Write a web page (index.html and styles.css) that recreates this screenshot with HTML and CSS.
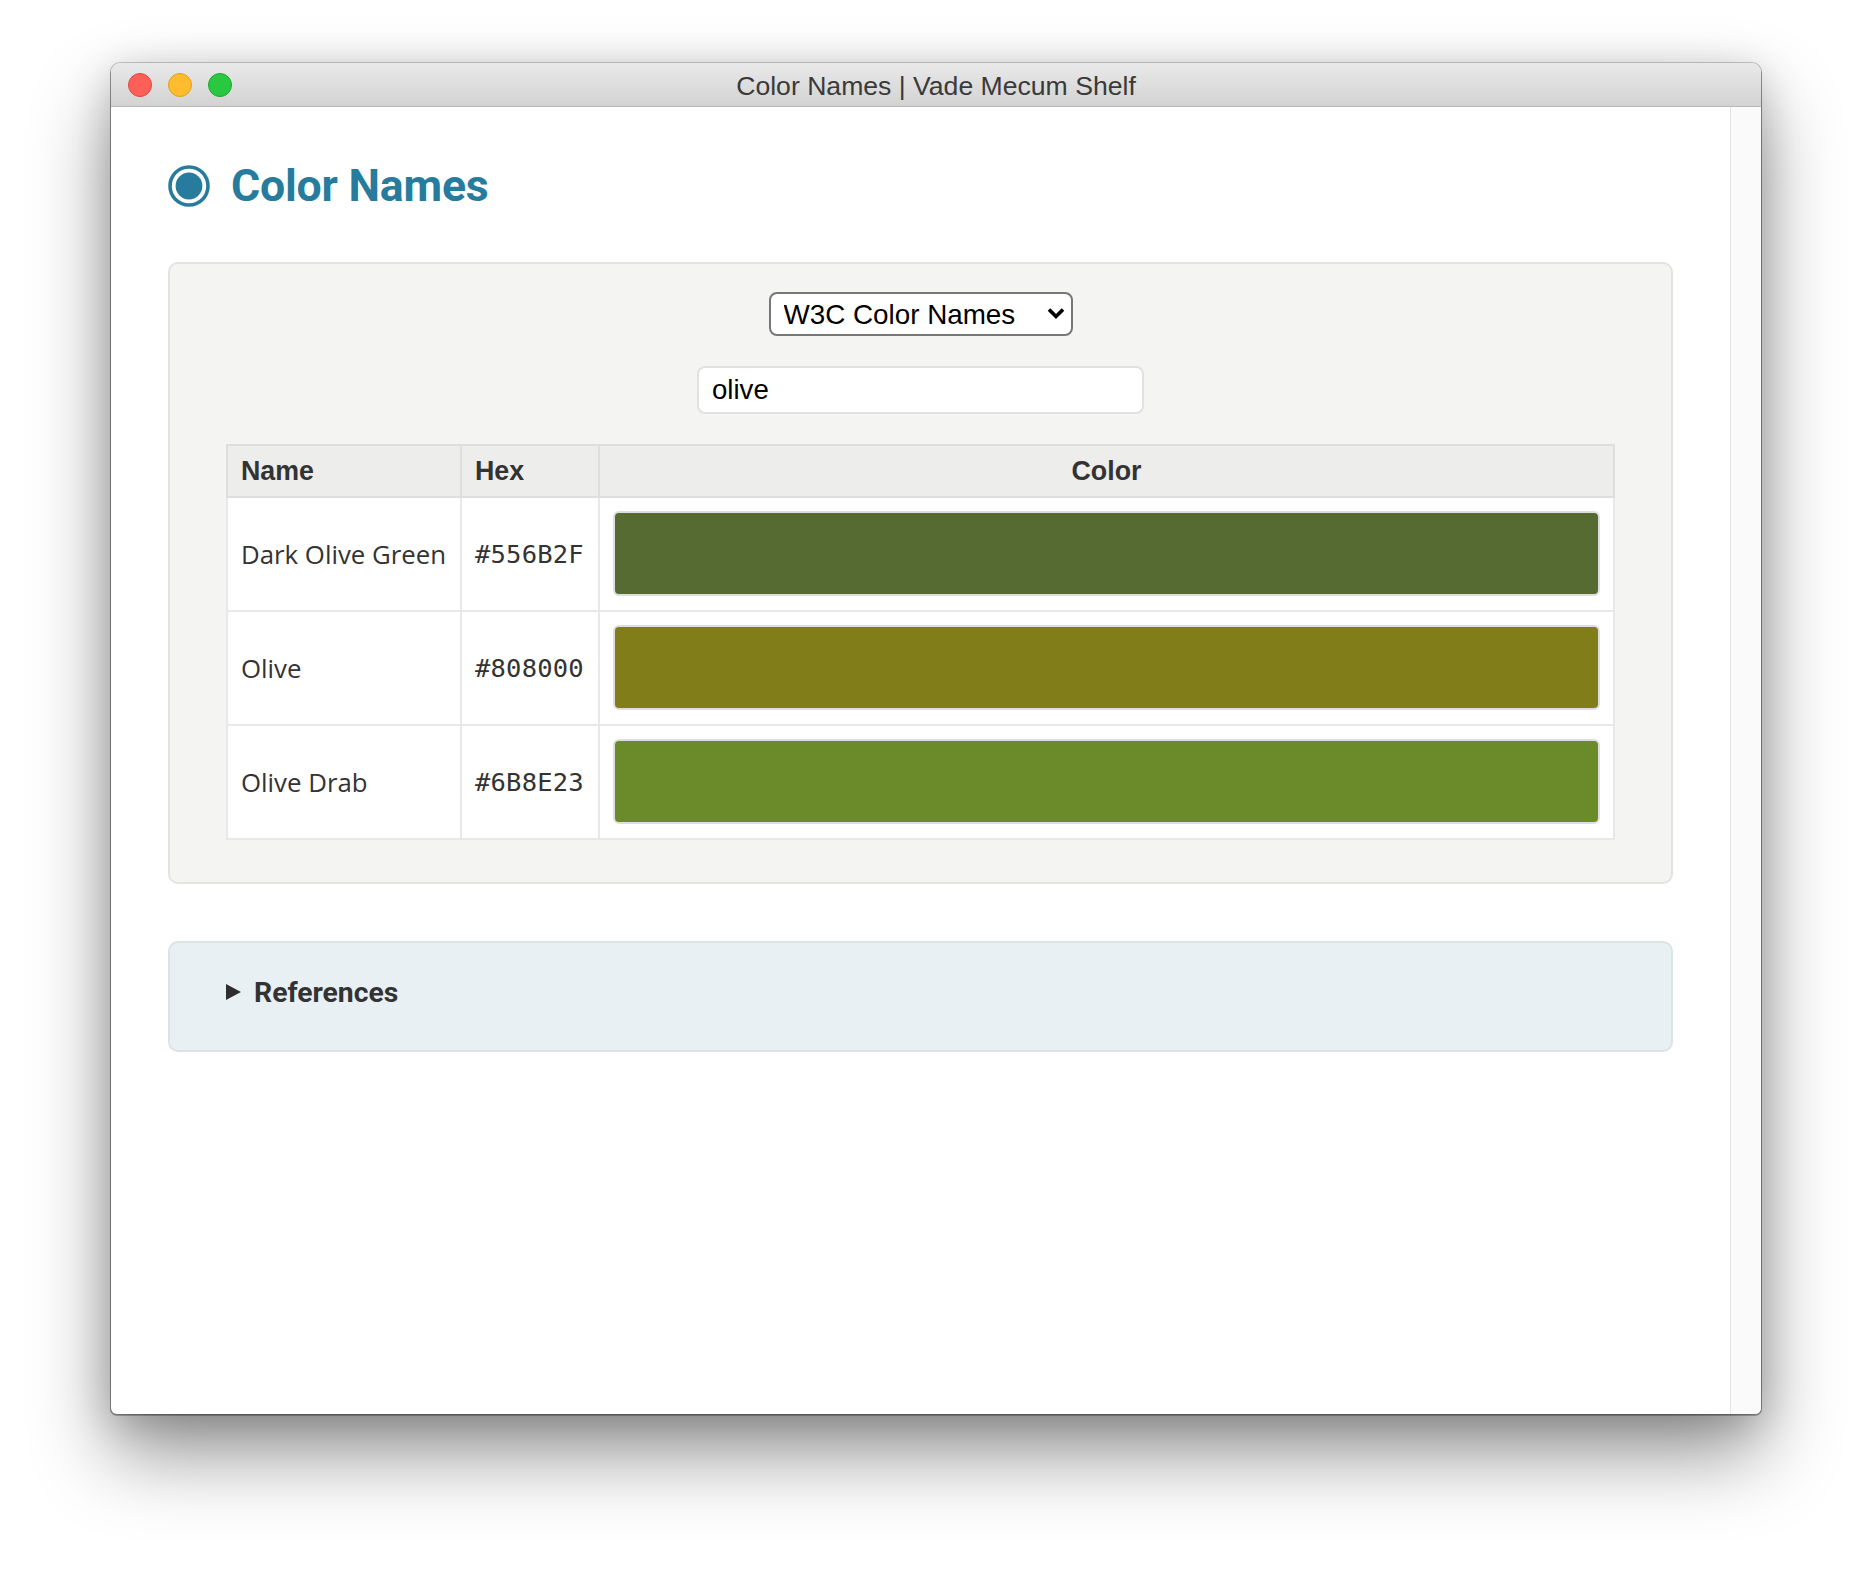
FILE: index.html
```html
<!DOCTYPE html>
<html lang="en">
<head>
<meta charset="utf-8">
<title>Color Names | Vade Mecum Shelf</title>
<link rel="stylesheet" href="styles.css">
</head>
<body>
<div class="window">
  <div class="titlebar">
    <div class="lights">
      <span class="light red"></span>
      <span class="light yellow"></span>
      <span class="light green"></span>
    </div>
    <div class="title">Color Names | Vade Mecum Shelf</div>
    <div></div>
  </div>
  <div class="viewport">
    <main class="content">
      <h1 class="heading">
        <svg class="logo" width="42" height="42" viewBox="0 0 42 42">
          <circle cx="21" cy="21" r="19" fill="none" stroke="#277c9d" stroke-width="3.6"/>
          <circle cx="21" cy="21" r="13.4" fill="#277c9d"/>
        </svg>
        <span>Color Names</span>
      </h1>
      <section class="panel">
        <div class="select-wrap">
          <select class="select"><option>W3C Color Names</option></select>
          <svg class="chev" width="18" height="13" viewBox="0 0 18 13"><polyline points="2,2.5 9,9.5 16,2.5" fill="none" stroke="#000" stroke-width="3.6" stroke-linecap="butt"/></svg>
        </div>
        <input class="search" type="text" value="olive">
        <table class="table">
          <colgroup><col class="c-name"><col class="c-hex"><col></colgroup>
          <thead>
            <tr><th>Name</th><th>Hex</th><th class="th-color">Color</th></tr>
          </thead>
          <tbody>
            <tr><td>Dark Olive Green</td><td class="hex">#556B2F</td><td class="cell-swatch"><div class="swatch" style="background:#566b31"></div></td></tr>
            <tr><td>Olive</td><td class="hex">#808000</td><td class="cell-swatch"><div class="swatch" style="background:#817d19"></div></td></tr>
            <tr><td>Olive Drab</td><td class="hex">#6B8E23</td><td class="cell-swatch"><div class="swatch" style="background:#6b8b2b"></div></td></tr>
          </tbody>
        </table>
      </section>
      <details class="refs">
        <summary class="refs-summary"><span class="tri"></span><span>References</span></summary>
      </details>
    </main>
    <div class="scrollbar"></div>
  </div>
</div>
</body>
</html>
```
FILE: styles.css
```css
html, body {
  margin: 0;
  background: #ffffff;
}

body {
  font-family: "Open Sans", "Liberation Sans", sans-serif;
  padding: 63px 0 160px 111px;
  min-height: 1574px;
  box-sizing: border-box;
}

.window {
  width: 1650px;
  height: 1351px;
  border-radius: 9px 9px 6px 6px;
  overflow: hidden;
  background: #ffffff;
  display: flex;
  flex-direction: column;
  box-shadow:
    0 0 0 1px rgba(0, 0, 0, 0.2),
    0 1px 0 1px rgba(0, 0, 0, 0.25),
    0 40px 80px rgba(0, 0, 0, 0.42),
    0 8px 40px rgba(0, 0, 0, 0.18);
}

.titlebar {
  flex: none;
  height: 44px;
  box-sizing: border-box;
  display: grid;
  grid-template-columns: 1fr auto 1fr;
  align-items: center;
  background: linear-gradient(#e9e9e9, #d3d3d3);
  border-bottom: 1px solid #b8b8b8;
}

.lights {
  display: flex;
  gap: 16px;
  padding-left: 17px;
}

.light {
  width: 24px;
  height: 24px;
  border-radius: 50%;
  box-sizing: border-box;
}

.red { background: #fe5f57; border: 1px solid #e2463f; }
.yellow { background: #febc2e; border: 1px solid #e1a116; }
.green { background: #2ac840; border: 1px solid #17a92b; }

.title {
  font-family: "Liberation Sans", Arial, sans-serif;
  font-size: 26.6px;
  color: #3a3a3a;
  white-space: nowrap;
  padding-top: 3px;
}

.viewport {
  flex: 1;
  display: flex;
  min-height: 0;
}

.content {
  flex: 1;
  padding: 0 57px;
}

.scrollbar {
  flex: none;
  width: 30px;
  background: #fafafa;
  border-left: 1px solid #e5e5e5;
}

.heading {
  margin: 58px 0 0;
  height: 42px;
  display: flex;
  align-items: center;
  gap: 21px;
  font-family: Roboto, "Liberation Sans", sans-serif;
  font-weight: 700;
  font-size: 44.6px;
  color: #277c9d;
  letter-spacing: -0.2px;
}

.logo {
  flex: none;
  display: block;
}

.panel {
  margin-top: 55px;
  background: #f4f4f3;
  border: 2px solid #e3e3e2;
  border-radius: 10px;
  padding: 28px 56px 42px;
  display: flex;
  flex-direction: column;
  align-items: center;
}

.select-wrap {
  position: relative;
  width: 304px;
  height: 44px;
}

.select {
  -webkit-appearance: none;
  appearance: none;
  width: 100%;
  height: 100%;
  box-sizing: border-box;
  border: 2px solid #777777;
  border-radius: 8px;
  background: #ffffff;
  padding: 0 0 0 13px;
  font-family: "Liberation Sans", Arial, sans-serif;
  font-size: 27.8px;
  color: #000000;
  margin: 0;
}

.chev {
  position: absolute;
  right: 8px;
  top: 15px;
  pointer-events: none;
}

.search {
  margin-top: 30px;
  width: 447px;
  height: 48px;
  box-sizing: border-box;
  border: 2px solid #e1e1e1;
  border-radius: 8px;
  padding: 0 13px;
  background: #ffffff;
  font-family: "Liberation Sans", Arial, sans-serif;
  font-size: 27.6px;
  color: #000000;
  outline: none;
}

.table {
  margin-top: 30px;
  width: 100%;
  border-collapse: collapse;
  table-layout: fixed;
  border: 2px solid #dcdcdc;
}

.c-name { width: 234px; }
.c-hex { width: 138px; }

.table th {
  background: #ededec;
  font-family: "Liberation Sans", Arial, sans-serif;
  font-weight: 700;
  font-size: 26.8px;
  color: #333333;
  text-align: left;
  padding: 0 13px;
  height: 50px;
  border: 2px solid #dedede;
}

.table th.th-color {
  text-align: center;
}

.table td {
  background: #ffffff;
  border: 2px solid #e8e8e8;
  padding: 13px 13px 14px;
  font-size: 25.8px;
  color: #333333;
  vertical-align: middle;
  white-space: nowrap;
}

.table td.hex {
  font-family: "DejaVu Sans Mono", "Liberation Mono", monospace;
  font-size: 25.5px;
  letter-spacing: 0.2px;
}

.swatch {
  height: 85px;
  box-sizing: border-box;
  border: 2px solid #dedede;
  border-radius: 6px;
}

.refs {
  margin-top: 57px;
  background: #e9f0f3;
  border: 2px solid #dbe3e7;
  border-radius: 10px;
  padding: 0 56px;
}

.refs-summary {
  list-style: none;
  height: 107px;
  box-sizing: border-box;
  padding-bottom: 9px;
  display: flex;
  align-items: center;
  gap: 13px;
  font-family: Roboto, "Liberation Sans", sans-serif;
  font-weight: 700;
  font-size: 28.3px;
  color: #333333;
  cursor: pointer;
}

.refs-summary::-webkit-details-marker {
  display: none;
}

.tri {
  width: 0;
  height: 0;
  border-left: 15px solid #2e2e2e;
  border-top: 8px solid transparent;
  border-bottom: 8px solid transparent;
}
```
